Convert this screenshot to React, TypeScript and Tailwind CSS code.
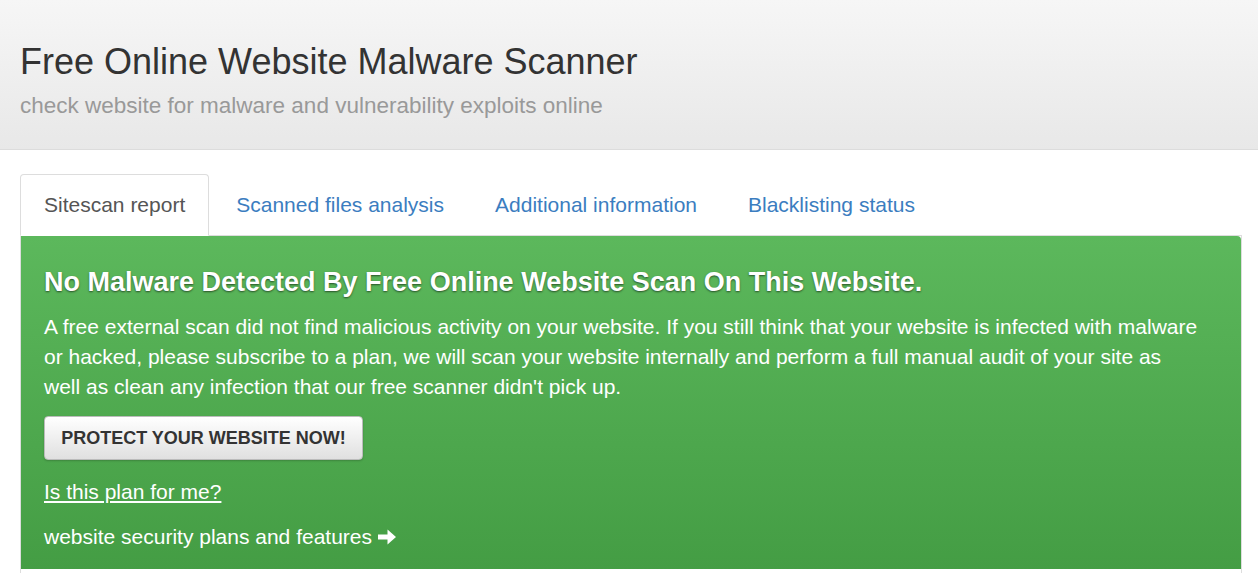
const tabs = ["Sitescan report", "Scanned files analysis", "Additional information", "Blacklisting status"]

function ArrowIcon() {
  return (
    <svg width="20" height="18" viewBox="0 0 20 18" fill="currentColor" aria-hidden="true">
      <path d="M1 6.5h9.5V1.5L19 9l-8.5 7.5v-5H1z" />
    </svg>
  )
}

export default function App() {
  return (
    <div className="min-h-screen bg-white font-['Liberation_Sans',Arial,sans-serif] text-[#333]">
      <header className="h-[150px] border-b border-[#dcdcdc] bg-gradient-to-b from-[#f6f6f6] to-[#e8e8e8] px-5 pt-[42px]">
        <h1 className="text-[36px] leading-[40px] text-[#333]">Free Online Website Malware Scanner</h1>
        <p className="mt-[10px] text-[22.5px] leading-[28px] text-[#999]">
          check website for malware and vulnerability exploits online
        </p>
      </header>

      <div className="px-5 pt-6 pr-4">
        <ul className="flex border-b border-[#ddd]">
          {tabs.map((tab, i) => (
            <li key={tab} className="-mb-px mr-[3px]">
              {i === 0 ? (
                <span className="block rounded-t border border-[#ddd] border-b-transparent bg-white px-[23px] pt-[16px] pb-[16px] text-[21px] leading-[28px] text-[#555]">
                  {tab}
                </span>
              ) : (
                <a href="#" className="block border border-transparent px-[23px] pt-[16px] pb-[16px] text-[21px] leading-[28px] text-[#3b7dc0]">
                  {tab}
                </a>
              )}
            </li>
          ))}
        </ul>

        <div className="border-x border-[#ddd] pb-6">
          <div className="rounded-tr bg-gradient-to-b from-[#5cb85c] to-[#449d44] pl-[23px] pr-6 pt-[31px] pb-[17px] text-white">
            <h3 className="text-[27px] font-bold leading-[30px] [text-shadow:0_1px_2px_rgba(0,0,0,0.55)]">
              No Malware Detected By Free Online Website Scan On This Website.
            </h3>
            <p className="mt-[15px] max-w-[1156px] text-[21px] leading-[30px]">
              A free external scan did not find malicious activity on your website. If you still think that your website is infected with malware or hacked, please subscribe to a plan, we will scan your website internally and perform a full manual audit of your site as well as clean any infection that our free scanner didn't pick up.
            </p>
            <button className="mt-[14px] h-[44px] w-[319px] rounded border border-[#bbb] bg-gradient-to-b from-white to-[#e0e0e0] text-[18px] font-bold text-[#333] shadow-[0_1px_2px_rgba(0,0,0,0.2)]">
              PROTECT YOUR WEBSITE NOW!
            </button>
            <div className="mt-[17px] text-[21px] leading-[30px]">
              <a href="#" className="underline">Is this plan for me?</a>
            </div>
            <div className="mt-[15px] flex items-center gap-[5px] text-[21px] leading-[30px]">
              <span>website security plans and features</span>
              <ArrowIcon />
            </div>
          </div>
        </div>
      </div>
    </div>
  )
}
